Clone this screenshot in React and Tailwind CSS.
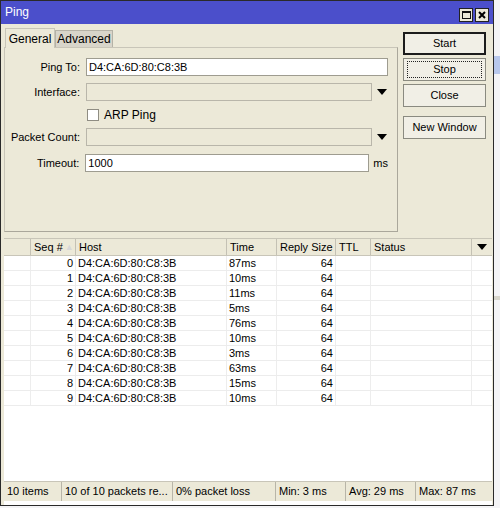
import React from 'react';

const rows = [
  { seq: 0, time: '87ms' },
  { seq: 1, time: '10ms' },
  { seq: 2, time: '11ms' },
  { seq: 3, time: '5ms' },
  { seq: 4, time: '76ms' },
  { seq: 5, time: '10ms' },
  { seq: 6, time: '3ms' },
  { seq: 7, time: '63ms' },
  { seq: 8, time: '15ms' },
  { seq: 9, time: '10ms' },
];

const HOST = 'D4:CA:6D:80:C8:3B';

function Arrow() {
  return (
    <svg width="10" height="6" viewBox="0 0 10 6" className="shrink-0">
      <path d="M0 0 H10 L5 6 Z" fill="#000" />
    </svg>
  );
}

function Field({ label, children, className = '' }) {
  return (
    <div className={`flex items-center ${className}`}>
      <div className="w-[76px] text-right pr-[1px]">{label}</div>
      <div className="flex items-center flex-1 ml-[5px]">{children}</div>
    </div>
  );
}

function WinButton({ children, isDefault, focused, className = '' }) {
  return (
    <div
      className={`h-[23px] w-[83px] flex items-center justify-center bg-[#f1efe6] ${
        isDefault ? 'border-2 border-[#1c1c1c]' : 'border border-[#8a8a80]'
      } ${className}`}
    >
      {focused ? (
        <div className="w-[75px] h-[17px] border border-dotted border-[#222] flex items-center justify-center">{children}</div>
      ) : (
        children
      )}
    </div>
  );
}

function StatusCell({ children, className = '' }) {
  return (
    <div className={`flex items-center pl-[3px] whitespace-nowrap overflow-hidden border-r border-[#b8b5a8] ${className}`}>
      {children}
    </div>
  );
}

export default function App() {
  return (
    <div
      className="flex w-[500px] h-[508px] bg-[#f4f4f6] text-[11px] text-black leading-none"
      style={{ fontFamily: '"Liberation Sans", Arial, sans-serif' }}
    >
      {/* window */}
      <div className="w-[494px] h-[506px] border border-[#2a2a2a] bg-[#ece9d8] flex flex-col shrink-0">
        {/* title bar */}
        <div className="h-[23px] bg-[#4b4fcb] flex items-start justify-between pl-[4px] pr-[4px] shrink-0">
          <span className="text-white text-[12px] mt-[5px]">Ping</span>
          <div className="flex gap-[2px] mt-[7px]">
            <div className="w-[14px] h-[14px] bg-[#ece9d8] border border-[#222] flex items-center justify-center">
              <div className="w-[9px] h-[8px] border border-[#111] border-t-2" />
            </div>
            <div className="w-[14px] h-[14px] bg-[#ece9d8] border border-[#222] flex items-center justify-center">
              <svg width="8" height="8" viewBox="0 0 8 8">
                <path d="M1 1 L7 7 M7 1 L1 7" stroke="#000" strokeWidth="2" />
              </svg>
            </div>
          </div>
        </div>

        {/* top area */}
        <div className="flex pl-[3px] shrink-0">
          <div className="w-[394px] flex flex-col">
            {/* tabs */}
            <div className="flex items-end h-[23px] pl-[1px]">
              <div className="h-[20px] w-[50px] border border-b-0 border-[#c8c5b8] bg-[#ece9d8] flex items-center justify-center text-[12px] relative top-[1px]">
                General
              </div>
              <div className="h-[17px] w-[58px] border border-b-0 border-[#b5b2a6] bg-[#d8d5ca] flex items-center justify-center text-[12px]">
                Advanced
              </div>
            </div>
            {/* panel */}
            <div className="h-[185px] border border-[#aaa79b] border-t-[#c8c5b8] border-l-[#c8c5b8] pt-[10px] pr-[9px] flex flex-col">
              <Field label="Ping To:">
                <div className="h-[18px] flex-1 bg-white border border-[#9e9c90] flex items-center pl-[2px]">{HOST}</div>
              </Field>
              <Field label="Interface:" className="mt-[7px]">
                <div className="h-[18px] w-[286px] bg-[#ece9d8] border border-[#b9b6aa]" />
                <div className="ml-[5px]"><Arrow /></div>
              </Field>
              <div className="flex items-center mt-[7px] pl-[82px] h-[13px]">
                <div className="w-[12px] h-[12px] bg-white border border-[#8f8d83]" />
                <span className="ml-[5px] text-[12px]">ARP Ping</span>
              </div>
              <Field label="Packet Count:" className="mt-[7px]">
                <div className="h-[18px] w-[286px] bg-[#ece9d8] border border-[#b9b6aa]" />
                <div className="ml-[5px]"><Arrow /></div>
              </Field>
              <Field label="Timeout:" className="mt-[8px]">
                <div className="h-[18px] w-[284px] bg-white border border-[#9e9c90] flex items-center pl-[2px]">1000</div>
                <span className="ml-[4px]">ms</span>
              </Field>
            </div>
          </div>
          {/* buttons */}
          <div className="flex flex-col ml-[5px] pt-[8px]">
            <WinButton isDefault>Start</WinButton>
            <WinButton focused className="mt-[3px]">Stop</WinButton>
            <WinButton className="mt-[3px]">Close</WinButton>
            <WinButton className="mt-[9px]">New Window</WinButton>
          </div>
        </div>

        {/* table */}
        <div className="mt-[6px] ml-[3px] mr-[1px] flex-1 bg-white border-t border-[#c8c5b8] flex flex-col min-h-0">
          <div className="flex h-[17px] bg-[#ece9d8] border-b border-[#c8c5b8] shrink-0">
            <div className="w-[27px] border-r border-[#c4c1b4]" />
            <div className="w-[45px] border-r border-[#c4c1b4] flex items-center pl-[3px]">
              Seq #<span className="ml-[2px] text-[#d8d8d8] text-[9px]">▲</span>
            </div>
            <div className="w-[151px] border-r border-[#c4c1b4] flex items-center pl-[3px]">Host</div>
            <div className="w-[50px] border-r border-[#c4c1b4] flex items-center pl-[3px]">Time</div>
            <div className="w-[59px] border-r border-[#c4c1b4] flex items-center pl-[3px]">Reply Size</div>
            <div className="w-[35px] border-r border-[#c4c1b4] flex items-center pl-[3px]">TTL</div>
            <div className="w-[101px] border-r border-[#c4c1b4] flex items-center pl-[3px]">Status</div>
            <div className="flex-1 flex items-center justify-center"><Arrow /></div>
          </div>
          <div className="flex-1 flex flex-col">
            {rows.map(r => (
              <div key={r.seq} className="flex h-[15px] border-b border-[#ececec] shrink-0">
                <div className="w-[27px] border-r border-[#ededed]" />
                <div className="w-[45px] border-r border-[#ededed] flex items-center justify-end pr-[2px]">{r.seq}</div>
                <div className="w-[151px] border-r border-[#ededed] flex items-center pl-[2px]">{HOST}</div>
                <div className="w-[50px] border-r border-[#ededed] flex items-center pl-[2px]">{r.time}</div>
                <div className="w-[59px] border-r border-[#ededed] flex items-center justify-end pr-[2px]">64</div>
                <div className="w-[35px] border-r border-[#ededed]" />
                <div className="w-[101px] border-r border-[#ededed]" />
                <div className="flex-1" />
              </div>
            ))}
          </div>
          {/* status bar */}
          <div className="h-[20px] bg-[#ece9d8] flex shrink-0 border-t border-[#c8c5b8] mb-[4px]">
            <StatusCell className="w-[58px]">10 items</StatusCell>
            <StatusCell className="w-[111px]">10 of 10 packets re...</StatusCell>
            <StatusCell className="w-[103px]">0% packet loss</StatusCell>
            <StatusCell className="w-[70px]">Min: 3 ms</StatusCell>
            <StatusCell className="w-[70px]">Avg: 29 ms</StatusCell>
            <StatusCell className="flex-1 border-r-0">Max: 87 ms</StatusCell>
          </div>
        </div>
      </div>
      {/* background behind window */}
      <div className="flex-1 flex flex-col">
        <div className="h-[56px]" />
        <div className="h-[18px] bg-[#b8c8ec]" />
        <div className="h-[222px]" />
        <div className="h-[4px] bg-[#d8d6cc]" />
        <div className="flex-1" />
      </div>
    </div>
  );
}
